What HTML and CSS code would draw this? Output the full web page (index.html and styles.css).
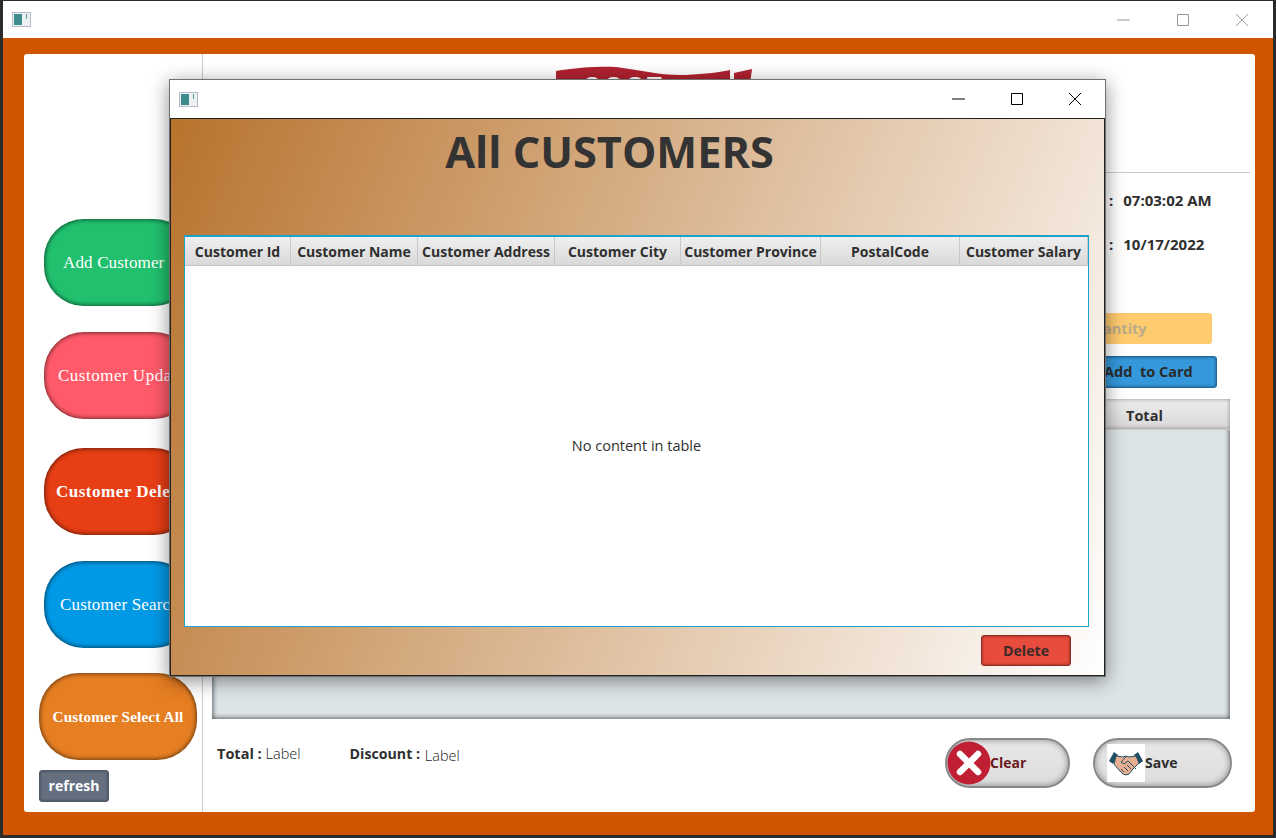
FILE: index.html
```html
<!DOCTYPE html>
<html lang="en">
<head>
    <meta charset="UTF-8">
    <meta name="viewport" content="width=device-width, initial-scale=1.0">
    <title>Customers</title>
    <link rel="stylesheet" href="styles.css">
</head>
<body>
    <div class="window">
        <div class="titlebar">
            <svg class="app-icon" viewBox="0 0 19 15" preserveAspectRatio="none"><rect x="0.5" y="0.5" width="18" height="14" fill="#eef1f4" stroke="#b5bcc6"/><rect x="2" y="2" width="8" height="11" fill="#3f8a8c"/><rect x="14" y="2" width="1" height="5" fill="#4fa58f"/></svg>
            <div class="win-controls faded">
                <svg viewBox="0 0 14 14"><path d="M0 7h13" stroke="#999" fill="none"/></svg>
                <svg viewBox="0 0 14 14"><path d="M1.5 1.5h11v11h-11z" stroke="#999" fill="none"/></svg>
                <svg viewBox="0 0 14 14"><path d="M1 1l12 12M13 1L1 13" stroke="#999" fill="none"/></svg>
            </div>
        </div>
        <div class="frame">
            <div class="card">
                <aside class="sidebar">
                    <button class="pill green">Add Customer</button>
                    <button class="pill pink">Customer Update</button>
                    <button class="pill red bold">Customer Delete</button>
                    <button class="pill blue">Customer Search</button>
                    <button class="pill orange bold">Customer Select All</button>
                    <button class="refresh">refresh</button>
                </aside>
                <main class="content">
                    <div class="top">
                        <svg class="logo" viewBox="0 0 196 40">
                            <path d="M0 5C20 1 50 0 60 1C85 4 105 10 130 9C150 8 165 6 174 4L174 40H0z" fill="#b0222f"/>
                            <path d="M178 7L196 3L191 40H178z" fill="#b0222f"/>
                            <text x="27" y="28" class="logo-text">COST</text>
                        </svg>
                    </div>
                    <div class="clock">
                        <div class="clock-row"><b>:</b><b>07:03:02 AM</b></div>
                        <div class="clock-row"><b>:</b><b>10/17/2022</b></div>
                    </div>
                    <div class="entry">
                        <div class="qty">Quantity</div>
                        <button class="add-card">Add&nbsp; to Card</button>
                    </div>
                    <div class="cart">
                        <div class="cart-head"><span>Total</span></div>
                    </div>
                    <div class="summary">
                        <div class="sum"><b>Total :</b> <span>Label</span></div>
                        <div class="sum discount"><b>Discount :</b> <span class="low">Label</span></div>
                        <button class="round-btn clear">
                            <svg viewBox="0 0 44 44"><circle cx="22" cy="22" r="21.5" fill="#c01f33"/><path d="M13 13l18 18M31 13L13 31" stroke="#fff" stroke-width="6.5" stroke-linecap="round"/></svg>
                            <span>Clear</span>
                        </button>
                        <button class="round-btn save">
                            <svg viewBox="0 0 38 38"><rect width="38" height="38" fill="#fff"/><path d="M2 17l5-9 4 3-5 9zM36 17l-5-9-4 3 5 9z" fill="#1f4f63"/><path d="M9 12l7 1 3-1 3 1 7-1 3 7-7 7-3 4-3 1-3-1-4-4-5-6z" fill="#e8ae90" stroke="#1f4f63"/><path d="M19 13l-5 5 3 2 4-3 8 8M14 25l3 3M17 23l4 4M20 21l4 4" stroke="#1f4f63" fill="none"/></svg>
                            <span>Save</span>
                        </button>
                    </div>
                </main>
            </div>
        </div>
    </div>

    <section class="dialog">
        <div class="titlebar dialog-bar">
            <svg class="app-icon" viewBox="0 0 19 15" preserveAspectRatio="none"><rect x="0.5" y="0.5" width="18" height="14" fill="#eef1f4" stroke="#b5bcc6"/><rect x="2" y="2" width="8" height="11" fill="#3f8a8c"/><rect x="14" y="2" width="1" height="5" fill="#4fa58f"/></svg>
            <div class="win-controls">
                <svg viewBox="0 0 14 14"><path d="M0 7h13" stroke="#000" fill="none"/></svg>
                <svg viewBox="0 0 14 14"><path d="M1.5 1.5h11v11h-11z" stroke="#000" fill="none"/></svg>
                <svg viewBox="0 0 14 14"><path d="M1 1l12 12M13 1L1 13" stroke="#000" fill="none"/></svg>
            </div>
        </div>
        <div class="dialog-body">
            <h1>All CUSTOMERS</h1>
            <div class="table">
                <div class="thead">
                    <div class="th" style="width:106px">Customer Id</div>
                    <div class="th" style="width:127px">Customer Name</div>
                    <div class="th" style="width:137px">Customer Address</div>
                    <div class="th" style="width:126px">Customer City</div>
                    <div class="th" style="width:140px">Customer Province</div>
                    <div class="th" style="width:139px">PostalCode</div>
                    <div class="th" style="width:128px">Customer Salary</div>
                </div>
                <div class="empty">No content in table</div>
            </div>
            <div class="dialog-foot">
                <button class="delete">Delete</button>
            </div>
        </div>
    </section>
</body>
</html>
```

FILE: styles.css
```css
* {
    box-sizing: border-box;
}
html, body {
    height: 100%;
}
body {
    margin: 0;
    background-color: #2b2b2b;
    font-family: "Open Sans", "Noto Sans", sans-serif;
    color: #2f2f2f;
    overflow: hidden;
}
button {
    font-family: inherit;
    cursor: pointer;
}
.window {
    width: 1270px;
    height: 834px;
    margin: 1px 0 0 3px;
    display: flex;
    flex-direction: column;
}
.titlebar {
    height: 37px;
    background-color: #fff;
    display: flex;
    align-items: center;
    justify-content: space-between;
    padding: 0 24px 0 9px;
    flex-shrink: 0;
}
.app-icon {
    width: 19px;
    height: 15px;
}
.win-controls {
    display: flex;
    gap: 45px;
}
.win-controls svg {
    width: 14px;
    height: 14px;
}
.frame {
    flex: 1;
    background-color: #d15400;
    padding: 16px 18px 23px 21px;
}
.card {
    height: 100%;
    background-color: #fff;
    border-radius: 3px;
    display: flex;
}

/* left column */
.sidebar {
    width: 179px;
    flex-shrink: 0;
    border-right: 1px solid #ccc;
    padding: 165px 0 0 20px;
    display: flex;
    flex-direction: column;
    align-items: flex-start;
}
.pill {
    width: 150px;
    height: 87px;
    border-radius: 40px;
    border: none;
    box-shadow: inset 0 0 4px 1px rgba(0, 0, 0, 0.55);
    color: #fff;
    font-family: "Liberation Serif", serif;
    font-size: 17px;
    letter-spacing: 0.15px;
    white-space: nowrap;
    padding: 0;
    text-align: left;
    flex-shrink: 0;
    overflow: hidden;
}
.pill.bold {
    font-weight: bold;
}
.green {
    background-color: #21c06e;
    padding-left: 19px;
}
.pink {
    background-color: #ff5a69;
    margin-top: 26px;
    padding-left: 14px;
    letter-spacing: 0.5px;
}
.red {
    background-color: #e73e15;
    margin-top: 29px;
    padding-left: 12px;
    letter-spacing: 0.5px;
}
.blue {
    background-color: #0099e5;
    margin-top: 26px;
    padding-left: 16px;
}
.orange {
    background-color: #e67e22;
    width: 158px;
    margin: 25px 0 0 -5px;
    font-size: 15.2px;
    text-align: center;
    padding: 0;
}
.refresh {
    width: 70px;
    height: 32px;
    margin: 10px 0 0 -5px;
    background-color: #64707f;
    color: #fff;
    border: 1px solid #4f5a68;
    border-radius: 3px;
    box-shadow: inset 0 0 3px rgba(0, 0, 0, 0.4);
    font-size: 14px;
    font-weight: bold;
    padding: 0 0 2px;
}

/* right side */
.content {
    flex: 1;
    min-width: 0;
    display: flex;
    flex-direction: column;
    padding: 0 25px 0 9px;
}
.top {
    height: 119px;
    margin-right: -20px;
    border-bottom: 1px solid #ccc;
    padding: 12px 0 0 344px;
    overflow: hidden;
}
.logo {
    width: 196px;
    height: 40px;
    display: block;
}
.logo-text {
    font-family: "Liberation Sans", sans-serif;
    font-weight: bold;
    font-size: 24px;
    letter-spacing: 4px;
    fill: #fff;
}
.clock {
    padding: 17px 0 0 897px;
    height: 118px;
}
.clock-row {
    display: flex;
    gap: 10px;
    height: 44px;
    font-size: 15px;
    line-height: 20px;
    white-space: nowrap;
}
.entry {
    display: flex;
    flex-direction: column;
    align-items: flex-end;
    gap: 12px;
    padding-right: 13px;
    margin-top: 22px;
}
.qty {
    width: 152px;
    height: 31px;
    margin-right: 5px;
    background-color: #ffcb6f;
    border-radius: 3px;
    color: #b9aa8a;
    font-size: 14.5px;
    font-weight: bold;
    line-height: 31px;
    padding-left: 22px;
}
.add-card {
    width: 130px;
    height: 32px;
    background-color: #3498db;
    border: 1px solid #1f6a9c;
    border-radius: 3px;
    box-shadow: inset 0 0 3px rgba(0, 0, 0, 0.5);
    color: #2b2b2b;
    font-size: 14.5px;
    font-weight: bold;
    padding: 0 0 2px 16px;
    text-align: left;
    white-space: nowrap;
}
.cart {
    height: 320px;
    margin-top: 11px;
    background-color: #dde4e8;
    box-shadow: inset 0 0 5px 1px rgba(0, 0, 0, 0.6);
}
.cart-head {
    height: 31px;
    background: linear-gradient(#ececec, #d8d8d8);
    border-bottom: 1px solid #ccc;
    box-shadow: inset 0 0 4px rgba(0, 0, 0, 0.4);
    font-size: 14.5px;
    font-weight: bold;
    line-height: 33px;
    padding-left: 914px;
}
.summary {
    display: flex;
    align-items: flex-start;
    padding: 19px 0 0 5px;
}
.sum {
    font-size: 14.5px;
    line-height: 20px;
    white-space: nowrap;
    margin-top: 6px;
}
.sum span {
    font-weight: 300;
    color: #222;
}
.sum .low {
    position: relative;
    top: 2px;
    margin-left: 1px;
}
.discount {
    margin-left: 49px;
}
.discount b {
    font-size: 14.2px;
}
.round-btn {
    height: 50px;
    border-radius: 25px;
    border: 2px solid #888;
    background: linear-gradient(#e8e8e8, #dcdcdc);
    box-shadow: inset 0 0 6px rgba(0, 0, 0, 0.4);
    font-size: 14px;
    font-weight: bold;
    color: #2f2f2f;
    padding: 0;
    display: flex;
    align-items: center;
}
.round-btn span {
    margin: -2px 0 0 -1px;
}
.clear {
    width: 125px;
    margin-left: auto;
    color: #6a1a20;
    padding-left: 0;
}
.clear svg {
    width: 44px;
    height: 44px;
}
.save {
    width: 139px;
    margin: 0 -2px 0 23px;
    padding-left: 12px;
}
.save svg {
    width: 38px;
    height: 38px;
    margin-right: 1px;
}

/* customers dialog, floats over the main window */
.dialog {
    position: absolute;
    left: 169px;
    top: 79px;
    width: 937px;
    height: 598px;
    border: 1px solid #707070;
    background-color: #fff;
    box-shadow: 0 4px 18px rgba(0, 0, 0, 0.45);
    display: flex;
    flex-direction: column;
}
.dialog-bar {
    height: 38px;
    padding: 0 23px 0 9px;
}
.dialog-bar .win-controls {
    gap: 44px;
}
.dialog-body {
    flex: 1;
    border: 1px solid #222;
    background: linear-gradient(112deg, #b8732d 0%, #fff 100%);
    padding: 0 15px 0 13px;
    display: flex;
    flex-direction: column;
}
.dialog-body h1 {
    margin: 3px 0 0 0;
    height: 113px;
    font-size: 43.3px;
    line-height: 60px;
    font-weight: bold;
    color: #333;
    text-align: center;
    padding-right: 54px;
    white-space: nowrap;
}
.table {
    height: 392px;
    background-color: #fff;
    border: 1px solid #1aa3cc;
    box-shadow: inset 0 1px 0 #1aa3cc;
    display: flex;
    flex-direction: column;
    padding-top: 1px;
}
.thead {
    display: flex;
    height: 29px;
    flex-shrink: 0;
}
.th {
    background: linear-gradient(#efefef, #d9d9d9);
    border-right: 1px solid #c8c8c8;
    border-bottom: 1px solid #c4c4c4;
    font-size: 14px;
    font-weight: bold;
    line-height: 30px;
    text-align: center;
    white-space: nowrap;
}
.empty {
    flex: 1;
    display: flex;
    align-items: center;
    justify-content: center;
    font-size: 14.5px;
    padding-bottom: 1px;
}
.dialog-foot {
    display: flex;
    justify-content: flex-end;
    padding: 8px 18px 0 0;
}
.delete {
    width: 90px;
    height: 31px;
    background-color: #e74c3c;
    border: 1px solid #8f2d25;
    border-radius: 3px;
    box-shadow: inset 0 0 3px rgba(0, 0, 0, 0.5);
    color: #3a2a2a;
    font-size: 14.2px;
    font-weight: bold;
    padding: 0 0 1px;
}
```
